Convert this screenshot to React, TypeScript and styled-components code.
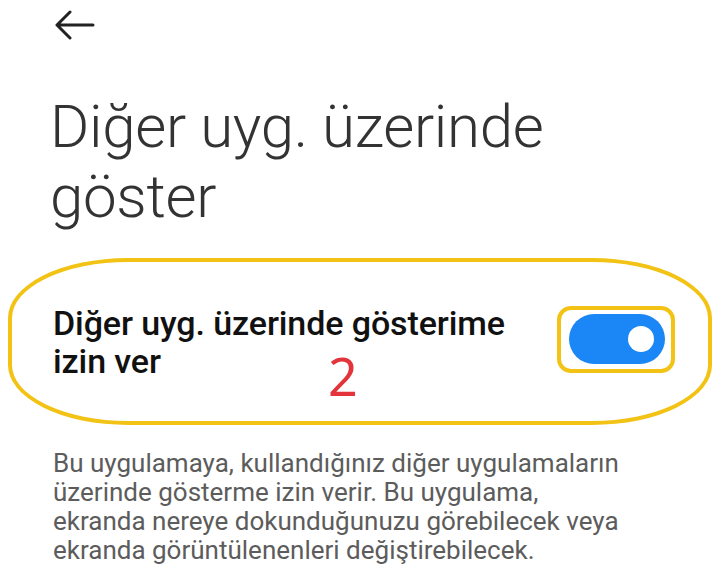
import React from 'react';
import styled, { createGlobalStyle } from 'styled-components';

const GlobalStyle = createGlobalStyle`
    html, body {
        margin: 0;
        padding: 0;
        background: #ffffff;
    }
    body {
        font-family: Roboto, 'Noto Sans', 'Liberation Sans', sans-serif;
        -webkit-font-smoothing: antialiased;
    }
`;

const Page = styled.div`
    width: 720px;
    height: 576px;
    overflow: hidden;
    display: flex;
    flex-direction: column;
    background: #fff;
`;
const TopBar = styled.div`
    height: 50px;
    padding-left: 53px;
    display: flex;
    align-items: center;
`;
const BackButton = styled.button`
    background: transparent;
    border: none;
    padding: 0;
    width: 44px;
    height: 30px;
    color: #222;
    svg {
        display: block;
    }
`;
const Title = styled.h1`
    margin: 42px 0 0;
    padding-left: 50px;
    font-size: 60px;
    line-height: 70px;
    font-weight: 300;
    color: #333;
    letter-spacing: -0.3px;
`;
const Highlight = styled.div`
    position: relative;
    margin: 26px 8px 0;
    height: 159px;
    padding: 0 33px 0 41px;
    border: 4px solid #f2c315;
    border-radius: 120px / 60px;
    display: flex;
    align-items: center;
    justify-content: space-between;
`;
const Label = styled.div`
    font-size: 34px;
    line-height: 38px;
    font-weight: 500;
    color: #111;
    letter-spacing: -0.1px;
`;
const ToggleFrame = styled.div`
    padding: 4px 6px 5px 8px;
    border: 4px solid #f2c315;
    border-radius: 14px;
    margin-bottom: 4px;
`;
const Switch = styled.div<{ on?: boolean }>`
    width: 96px;
    height: 50px;
    border-radius: 25px;
    background: ${({ on }) => (on ? '#1b86f6' : '#c8c8c8')};
    display: flex;
    align-items: center;
    justify-content: ${({ on }) => (on ? 'flex-end' : 'flex-start')};
    padding: 0 11px;
    box-sizing: border-box;
`;
const Knob = styled.div`
    width: 26px;
    height: 26px;
    border-radius: 50%;
    background: #fff;
`;
const Marker = styled.span`
    position: absolute;
    left: 316px;
    top: 88px;
    font-size: 52px;
    line-height: 52px;
    color: #e3343c;
    font-family: 'Noto Sans', Roboto, sans-serif;
`;
const Description = styled.p`
    margin: 24px 0 0;
    padding-left: 53px;
    font-size: 26px;
    line-height: 29px;
    color: #5c5c5c;
`;

const BackIcon = () => (
    <svg width="44" height="30" viewBox="0 0 44 30" fill="none">
        <path d="M4 15 H40 M17 2 L4 15 L17 28" stroke="currentColor" strokeWidth="3" strokeLinecap="round" strokeLinejoin="round" />
    </svg>
);

export default function App() {
    return (
        <Page>
            <GlobalStyle />
            <TopBar>
                <BackButton aria-label="Geri">
                    <BackIcon />
                </BackButton>
            </TopBar>
            <Title>
                Diğer uyg. üzerinde
                <br />
                göster
            </Title>
            <Highlight>
                <Label>
                    Diğer uyg. üzerinde gösterime
                    <br />
                    izin ver
                </Label>
                <ToggleFrame>
                    <Switch on>
                        <Knob />
                    </Switch>
                </ToggleFrame>
                <Marker>2</Marker>
            </Highlight>
            <Description>
                Bu uygulamaya, kullandığınız diğer uygulamaların
                <br />
                üzerinde gösterme izin verir. Bu uygulama,
                <br />
                ekranda nereye dokunduğunuzu görebilecek veya
                <br />
                ekranda görüntülenenleri değiştirebilecek.
            </Description>
        </Page>
    );
}
